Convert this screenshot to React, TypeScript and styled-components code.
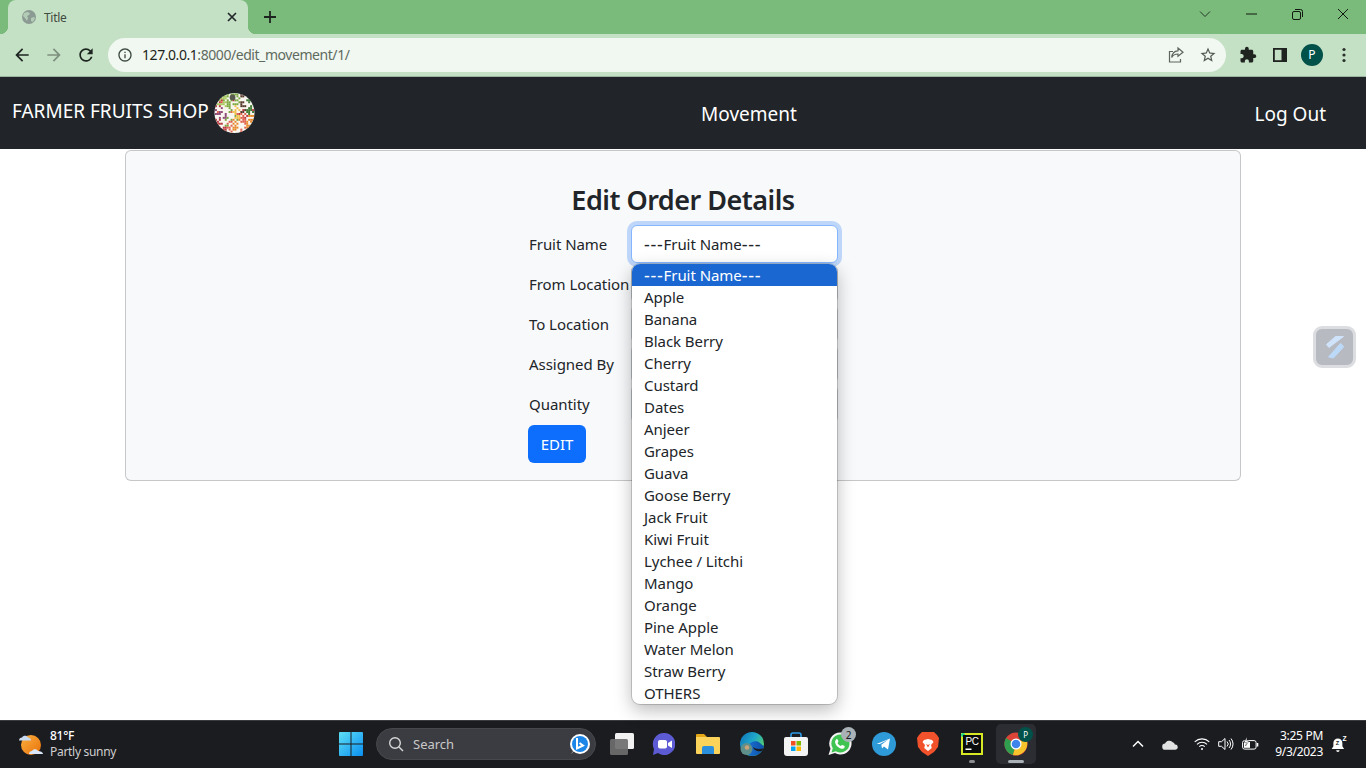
import React from "react";
import styled, { createGlobalStyle } from "styled-components";

const Global = createGlobalStyle`
  html, body { margin: 0; padding: 0; background: #fff; }
  body { font-family: "Noto Sans", "Open Sans", sans-serif; overflow: hidden; }
  * { box-sizing: border-box; }
`;

const Screen = styled.div`
  position: relative;
  width: 1366px;
  height: 768px;
  display: flex;
  flex-direction: column;
  overflow: hidden;
`;

/* ---------- browser chrome ---------- */
const TabStrip = styled.div`
  height: 34px;
  background: #7abb7c;
  display: flex;
  align-items: flex-end;
  padding-left: 8px;
  flex: none;
`;
const Tab = styled.div`
  position: relative;
  width: 240px;
  height: 34px;
  background: #c5e1c5;
  border-radius: 8px 8px 0 0;
  display: flex;
  align-items: center;
  padding: 0 11px 0 13px;
  gap: 7px;
  color: #3f4a40;
  font-size: 12px;
  letter-spacing: -0.3px;
  &::before, &::after {
    content: "";
    position: absolute;
    bottom: 0;
    width: 8px;
    height: 8px;
  }
  &::before { left: -8px; background: radial-gradient(circle at 0 0, transparent 8px, #c5e1c5 8.5px); }
  &::after { right: -8px; background: radial-gradient(circle at 100% 0, transparent 8px, #c5e1c5 8.5px); }
`;
const TabTitle = styled.span`
  flex: 1;
`;
const NewTab = styled.div`
  width: 28px;
  height: 28px;
  margin: 0 0 3px 8px;
  display: flex;
  align-items: center;
  justify-content: center;
`;
const WindowControls = styled.div`
  margin-left: auto;
  align-self: stretch;
  display: flex;
  padding: 0 0 6px 0;
`;
const WinButton = styled.div`
  width: 46px;
  display: flex;
  align-items: center;
  justify-content: center;
`;
const Toolbar = styled.div`
  height: 43px;
  flex: none;
  background: #c5e1c5;
  border-bottom: 1px solid #9db59e;
  display: flex;
  align-items: center;
  padding: 0 0 1px 6px;
`;
const NavIcon = styled.div`
  width: 32px;
  height: 32px;
  display: flex;
  align-items: center;
  justify-content: center;
`;
const Omnibox = styled.div`
  width: 1118px;
  height: 34px;
  margin-left: 6px;
  border-radius: 17px;
  background: #f1f7f1;
  display: flex;
  align-items: center;
  padding: 0 2px 0 9px;
  font-size: 14px;
  letter-spacing: -0.44px;
  color: #5f6b60;
`;
const Url = styled.span`
  flex: 1;
  margin: 0 0 0 9px;
  b { font-weight: 400; color: #1d2420; }
`;
const OmniIcon = styled.div`
  width: 32px;
  height: 26px;
  display: flex;
  align-items: center;
  justify-content: center;
`;
const ToolIcons = styled.div`
  display: flex;
  align-items: center;
  margin-left: 6px;
`;
const ToolIcon = styled.div`
  width: 32px;
  height: 32px;
  display: flex;
  align-items: center;
  justify-content: center;
`;
const Avatar = styled.div`
  width: 22px;
  height: 22px;
  border-radius: 50%;
  background: #00514a;
  color: #fff;
  font-size: 12px;
  display: flex;
  align-items: center;
  justify-content: center;
`;

/* ---------- page ---------- */
const Navbar = styled.nav`
  height: 72px;
  flex: none;
  background: #212529;
  color: #fff;
  display: grid;
  grid-template-columns: 1fr auto 1fr;
  align-items: center;
  padding: 0 40px 0 12px;
  font-size: 19px;
  letter-spacing: 0;
`;
const Brand = styled.div`
  display: flex;
  align-items: center;
  gap: 5px;
  margin-top: -1px;
  span { margin-bottom: 4px; }
`;
const NavLink = styled.div<{ $right?: boolean }>`
  justify-self: ${(p) => (p.$right ? "end" : "center")};
  margin-left: ${(p) => (p.$right ? "0" : "160px")};
  margin-top: 2px;
`;
const Main = styled.main`
  flex: 1;
  padding-top: 1px;
  background: #fff;
`;
const Card = styled.section`
  width: 1116px;
  height: 331px;
  margin: 0 auto;
  background: #f8f9fa;
  border: 1px solid rgba(0, 0, 0, 0.2);
  border-radius: 6px;
  display: flex;
  flex-direction: column;
  align-items: center;
  padding-top: 30px;
`;
const Heading = styled.h2`
  margin: 0 0 6px;
  font-size: 27px;
  line-height: 38px;
  font-weight: 600;
  letter-spacing: -0.5px;
  color: #212529;
`;
const Form = styled.div`
  position: relative;
  width: 310px;
  display: flex;
  flex-direction: column;
  gap: 2px;
`;
const Row = styled.div`
  display: grid;
  grid-template-columns: 103px 207px;
  align-items: center;
  height: 38px;
  font-size: 15px;
  letter-spacing: -0.05px;
  color: #212529;
`;
const Label = styled.span`
  padding-left: 1px;
  white-space: nowrap;
`;
const Dashes = styled.span`
  font-size: 18px;
  letter-spacing: 0.7px;
  line-height: 0;
  vertical-align: -1px;
`;
const Field = styled.div<{ $focus?: boolean }>`
  height: 38px;
  background: #fff;
  border: 1px solid ${(p) => (p.$focus ? "#86b7fe" : "#ced4da")};
  border-radius: 6px;
  box-shadow: ${(p) => (p.$focus ? "0 0 0 4px rgba(13,110,253,.25)" : "none")};
  padding: 0 12px;
  display: flex;
  align-items: center;
  white-space: pre;
`;
const EditButton = styled.div`
  width: 58px;
  height: 38px;
  background: #0d6efd;
  color: #fff;
  border-radius: 6px;
  display: flex;
  align-items: center;
  justify-content: center;
  font-size: 15px;
  letter-spacing: -0.05px;
`;
const Dropdown = styled.div`
  position: absolute;
  left: 104px;
  top: 39px;
  width: 205px;
  height: 440px;
  background: #fff;
  border-radius: 8px;
  overflow: hidden;
  box-shadow: 0 0 0 1px rgba(0,0,0,.16), 0 6px 18px rgba(0,0,0,.28);
  z-index: 5;
`;
const Option = styled.div<{ $selected?: boolean }>`
  height: 22px;
  line-height: 22px;
  padding-left: 12px;
  font-size: 15px;
  letter-spacing: -0.05px;
  white-space: nowrap;
  color: ${(p) => (p.$selected ? "#fff" : "#212529")};
  background: ${(p) => (p.$selected ? "#1a67d2" : "transparent")};
`;
const FloatWidget = styled.div`
  position: absolute;
  left: 1313px;
  top: 326px;
  width: 43px;
  height: 42px;
  border-radius: 9px;
  border: 3px solid #dcdde1;
  background: #b8bac2;
  display: flex;
  align-items: center;
  justify-content: center;
`;

/* ---------- taskbar ---------- */
const Taskbar = styled.footer`
  height: 48px;
  flex: none;
  background: #1b1c20;
  border-top: 1px solid #3a3b3f;
  display: flex;
  align-items: center;
  padding-bottom: 1px;
  color: #fff;
  font-size: 12px;
  letter-spacing: -0.3px;
`;
const Weather = styled.div`
  width: 331px;
  padding-left: 18px;
  display: flex;
  align-items: center;
  gap: 6px;
`;
const WeatherText = styled.div`
  display: flex;
  flex-direction: column;
  line-height: 16px;
  span { color: #cfcfcf; }
  strong { font-weight: 500; }
`;
const Center = styled.div`
  display: flex;
  align-items: center;
`;
const Slot = styled.div<{ $ml?: number; $active?: boolean }>`
  position: relative;
  width: 40px;
  height: 40px;
  margin-left: ${(p) => p.$ml ?? 0}px;
  border-radius: 5px;
  display: flex;
  align-items: center;
  justify-content: center;
  background: ${(p) => (p.$active ? "#2c2d32" : "transparent")};
`;
const RunDot = styled.div<{ $wide?: boolean }>`
  position: absolute;
  bottom: 1px;
  left: 50%;
  transform: translateX(-50%);
  width: ${(p) => (p.$wide ? 16 : 6)}px;
  height: 3px;
  border-radius: 2px;
  background: ${(p) => (p.$wide ? "#a9b0b6" : "#8b8c90")};
`;
const Badge = styled.div`
  position: absolute;
  top: 3px;
  right: 4px;
  width: 15px;
  height: 15px;
  border-radius: 50%;
  background: #a9b2b7;
  color: #1b1c20;
  font-size: 10px;
  display: flex;
  align-items: center;
  justify-content: center;
`;
const ProfileBadge = styled.div`
  position: absolute;
  top: 3px;
  right: 3px;
  width: 15px;
  height: 15px;
  border-radius: 50%;
  background: #00514a;
  color: #fff;
  font-size: 8px;
  display: flex;
  align-items: center;
  justify-content: center;
`;
const SearchPill = styled.div`
  width: 220px;
  height: 32px;
  margin: 0 6px 0 5px;
  border-radius: 16px;
  background: #3b3c41;
  border: 1px solid #47484c;
  display: flex;
  align-items: center;
  padding: 0 4px 0 11px;
  gap: 9px;
  color: #c9c9c9;
  font-size: 13px;
  letter-spacing: 0;
  span { flex: 1; }
`;
const Tray = styled.div`
  margin-left: auto;
  display: flex;
  align-items: center;
  padding-right: 15px;
`;
const TrayIcon = styled.div<{ $w: number }>`
  width: ${(p) => p.$w}px;
  display: flex;
  align-items: center;
  justify-content: center;
`;
const Clock = styled.div`
  width: 61px;
  margin: 0 4px 0 0;
  text-align: right;
  line-height: 16px;
  white-space: nowrap;
`;

/* ---------- icons ---------- */
const M = ({ d, c, s = 24 }: { d: string; c: string; s?: number }) => (
  <svg width={s} height={s} viewBox="0 0 24 24"><path d={d} fill={c} /></svg>
);
const BACK = "M20 11H7.83l5.59-5.59L12 4l-8 8 8 8 1.41-1.41L7.83 13H20v-2z";
const FWD = "M4 11h12.17l-5.59-5.59L12 4l8 8-8 8-1.41-1.41L16.17 13H4v-2z";
const RELOAD = "M17.65 6.35A7.958 7.958 0 0 0 12 4c-4.42 0-7.99 3.58-7.99 8s3.57 8 7.99 8c3.73 0 6.84-2.55 7.73-6h-2.08A5.99 5.99 0 0 1 12 18c-3.31 0-6-2.69-6-6s2.69-6 6-6c1.66 0 3.14.69 4.22 1.78L13 11h7V4l-2.35 2.35z";
const INFO = "M11 7h2v2h-2zm0 4h2v6h-2zm1-9C6.48 2 2 6.48 2 12s4.48 10 10 10 10-4.48 10-10S17.52 2 12 2zm0 18c-4.41 0-8-3.59-8-8s3.59-8 8-8 8 3.59 8 8-3.59 8-8 8z";
const STAR = "M22 9.24l-7.19-.62L12 2 9.19 8.63 2 9.24l5.46 4.73L5.82 21 12 17.27 18.18 21l-1.63-7.03L22 9.24zM12 15.4l-3.76 2.27 1-4.28-3.32-2.88 4.38-.38L12 6.1l1.71 4.04 4.38.38-3.32 2.88 1 4.28L12 15.4z";
const PUZZLE = "M20.5 11H19V7c0-1.1-.9-2-2-2h-4V3.5C13 2.12 11.88 1 10.5 1S8 2.12 8 3.5V5H4c-1.1 0-1.99.9-1.99 2v3.8H3.5c1.49 0 2.7 1.21 2.7 2.7s-1.21 2.7-2.7 2.7H2V20c0 1.1.9 2 2 2h3.8v-1.5c0-1.49 1.21-2.7 2.7-2.7 1.49 0 2.7 1.21 2.7 2.7V22H17c1.1 0 2-.9 2-2v-4h1.5c1.38 0 2.5-1.12 2.5-2.5S21.88 11 20.5 11z";

const Globe = () => (
  <svg width="16" height="16" viewBox="0 0 16 16">
    <circle cx="8" cy="8" r="7" fill="#8b9a93" />
    <path d="M3 4l3-1 3 1-1 2-2 1 1 2-1 3-2-3-2-2zM10 9l3-1 1 1-2 4-2-1z" fill="#c5e1c5" opacity=".7" />
  </svg>
);
const Share = () => (
  <svg width="18" height="18" viewBox="0 0 18 18" fill="none" stroke="#5c665d" strokeWidth="1.2">
    <path d="M6 5.5H2.5v10.5h11v-3" />
    <path d="M11 2l5 4.3-5 4V8c-3 0-5 1-6.3 3.6C5 8 7 5 11 4.8z" />
  </svg>
);
const SidePanel = () => (
  <svg width="14" height="14" viewBox="0 0 14 14">
    <path d="M0 0h14v14H0z" fill="#202421" />
    <path d="M1.8 1.8H8.5v10.4H1.8z" fill="#c5e1c5" />
  </svg>
);
const Dots = () => (
  <svg width="16" height="16" viewBox="0 0 16 16" fill="#2a302b">
    <circle cx="8" cy="2.5" r="1.6" /><circle cx="8" cy="8" r="1.6" /><circle cx="8" cy="13.5" r="1.6" />
  </svg>
);

const MOSAIC = ["#b8393f", "#e8872a", "#f0c04c", "#7aa83f", "#3f7a34", "#8d4a78", "#e2604f", "#a9c95b", "#54382c"];
const mosaicCells = (() => {
  const cells: { x: number; y: number; c: string }[] = [];
  let seed = 17;
  for (let y = 1; y < 41; y += 2) {
    for (let x = 1; x < 41; x += 2) {
      seed = (seed * 73 + 41) % 1009;
      const main = x < 12 ? (y > 26 ? 0 : y < 14 ? 7 : 5) : x < 19 ? (y > 28 ? 6 : 3) : x < 27 ? (y < 12 ? 3 : y < 26 ? 2 : 1) : x < 33 ? (y < 20 ? 8 : 6) : (y < 22 ? 4 : 1);
      if (seed % 100 < 52) continue;
      cells.push({ x, y, c: MOSAIC[seed % 6 === 0 ? seed % MOSAIC.length : main] });
    }
  }
  return cells;
})();
const LogoMark = () => (
  <svg width="41" height="42" viewBox="0 0 42 42">
    <defs>
      <clipPath id="lc"><circle cx="21" cy="21" r="20.5" /></clipPath>
      <filter id="lb"><feGaussianBlur stdDeviation="0.45" /></filter>
    </defs>
    <g clipPath="url(#lc)">
      <rect width="42" height="42" fill="#f8f6ef" />
      <g filter="url(#lb)">
        {mosaicCells.map((m, i) => <rect key={i} x={m.x} y={m.y} width="2" height="2" fill={m.c} />)}
        <circle cx="19" cy="5" r="3" fill="#5a5a50" />
      </g>
    </g>
  </svg>
);
const Slash = () => (
  <svg width="24" height="26" viewBox="0 0 24 26">
    <path d="M12.500 2.500h8L6 13.500l-2.500-3z" fill="#cfe3fb" stroke="#cfe3fb" strokeLinejoin="round" />
    <path d="M17.500 9.300l3.300 3.400L10.500 24l-5-1z" fill="#bcd9f7" stroke="#bcd9f7" strokeLinejoin="round" />
  </svg>
);
const WeatherIcon = () => (
  <svg width="26" height="26" viewBox="0 0 26 26">
    <defs><linearGradient id="sun" x1="0" y1="0" x2="1" y2="1"><stop offset="0" stopColor="#fbb040" /><stop offset="1" stopColor="#e8710a" /></linearGradient></defs>
    <circle cx="13" cy="14" r="10" fill="url(#sun)" />
    <path d="M1 9.500c0-2 1.500-3 3-3 1-2.500 5-2.500 6 0 2 0 3 1.500 3 3z" fill="#c8d9f2" />
    <path d="M11 23c0-2 1.500-3 3-3 1-2.500 5-2.500 6 0 2 0 5 1 5 3z" fill="#dbe7f8" />
  </svg>
);
const WindowsLogo = () => (
  <svg width="24" height="24" viewBox="0 0 24 24">
    <defs><linearGradient id="win" x1="0" y1="0" x2="1" y2="1"><stop offset="0" stopColor="#5ee0f5" /><stop offset="1" stopColor="#0a8ef0" /></linearGradient></defs>
    <path d="M0 1a1 1 0 0 1 1-1h10.500v11.500H0zM12.500 0H23a1 1 0 0 1 1 1v10.500H12.500zM0 12.500h11.500V24H1a1 1 0 0 1-1-1zM12.500 12.500H24V23a1 1 0 0 1-1 1H12.500z" fill="url(#win)" />
  </svg>
);
const SearchGlass = () => (
  <svg width="16" height="16" viewBox="0 0 16 16" fill="none" stroke="#d8d8d8" strokeWidth="1.4">
    <circle cx="7" cy="7" r="5.3" /><path d="M11 11l4 4" />
  </svg>
);
const Bing = () => (
  <svg width="22" height="22" viewBox="0 0 22 22">
    <circle cx="11" cy="11" r="10" fill="#fff" />
    <path d="M2 21l3-3 0-5h3z" fill="#fff" />
    <circle cx="11" cy="11" r="8" fill="#1c86e8" />
    <path d="M8 5v10.500l6-3-3.500-2.500" fill="none" stroke="#fff" strokeWidth="2" />
  </svg>
);
const TaskView = () => (
  <svg width="24" height="24" viewBox="2 0 24 24">
    <rect x="7" y="1" width="19" height="16" rx="1.500" fill="#f1f1f1" />
    <rect x="2" y="7" width="18" height="16" rx="1.500" fill="#6e6e6e" opacity=".92" />
  </svg>
);
const Meet = () => (
  <svg width="24" height="24" viewBox="0 0 24 24">
    <path d="M13 1a11 11 0 1 1-6 20l-5 2 1-6A11 11 0 0 1 13 1z" fill="#5d5bd4" />
    <rect x="7" y="8" width="9" height="8.500" rx="2" fill="#fff" />
    <path d="M17 11l4-2.500v7.500l-4-2.500z" fill="#fff" />
  </svg>
);
const Folder = () => (
  <svg width="24" height="24" viewBox="0 0 24 24">
    <path d="M0 3a1 1 0 0 1 1-1h7l3 3h-11z" fill="#e3a717" />
    <path d="M0 5h23a1 1 0 0 1 1 1v15a1 1 0 0 1-1 1H1a1 1 0 0 1-1-1z" fill="#fbd25a" />
    <path d="M6 16a2 2 0 0 1 2-2h8a2 2 0 0 1 2 2v6H6z" fill="#2a8fdc" />
  </svg>
);
const Edge = () => (
  <svg width="24" height="24" viewBox="0 0 24 24">
    <defs>
      <linearGradient id="edg" x1="0" y1="0" x2="1" y2="0.6"><stop offset="0" stopColor="#0e6fb8" /><stop offset=".55" stopColor="#1fa8c9" /><stop offset="1" stopColor="#58d06a" /></linearGradient>
      <linearGradient id="edb" x1="0" y1="0" x2="1" y2="0"><stop offset="0" stopColor="#1b6fd0" /><stop offset="1" stopColor="#0b4fa8" /></linearGradient>
    </defs>
    <circle cx="12" cy="12" r="12" fill="url(#edg)" />
    <path d="M8 14c2-5 9-6 12-3 2 2 3.500 3 4 3-1 6-6 10-12 10-2 0-3-1-4-2z" fill="url(#edb)" />
    <path d="M13 15c2 2 6 2.500 10.500 1.500-.5 1-1 1.500-1.500 2.500-3 1-8 0-9-4z" fill="#1b1c20" />
    <circle cx="6.500" cy="17" r="6" fill="#5f8f8a" />
    <circle cx="7" cy="15.500" r="2.300" fill="#c9a37a" />
  </svg>
);
const Store = () => (
  <svg width="24" height="24" viewBox="0 0 24 24">
    <path d="M7 6V3a2 2 0 0 1 2-2h6a2 2 0 0 1 2 2v3" fill="none" stroke="#2f9be8" strokeWidth="1.600" />
    <path d="M0 7a2 2 0 0 1 2-2h20a2 2 0 0 1 2 2v14a3 3 0 0 1-3 3H3a3 3 0 0 1-3-3z" fill="#f4f4f4" />
    <rect x="7" y="9" width="4.500" height="4.500" fill="#f25022" /><rect x="12.500" y="9" width="4.500" height="4.500" fill="#7fba00" />
    <rect x="7" y="14.500" width="4.500" height="4.500" fill="#00a4ef" /><rect x="12.500" y="14.500" width="4.500" height="4.500" fill="#ffb900" />
  </svg>
);
const WhatsApp = () => (
  <svg width="24" height="24" viewBox="0 0 24 24">
    <path d="M12.500 0.500a11 11 0 1 1-5.500 20.500L0.500 23l2-6.300A11 11 0 0 1 12.500 0.500z" fill="#f4f4f4" />
    <path d="M12.500 2.500a9 9 0 1 1-4.700 16.700L3.500 20.500l1.300-4.200A9 9 0 0 1 12.500 2.500z" fill="#3fc351" />
    <path d="M9 7c1 0 1.500 2.500 1.300 3l-.8 1c.6 1.300 2 2.500 3.300 3l1-1c.8-.3 2.800.8 3 1.300 0 2-2 2.700-3 2.500-3.300-.6-6-3.300-6.700-6.300C6.900 9 8 7 9 7z" fill="#fff" />
  </svg>
);
const Telegram = () => (
  <svg width="24" height="24" viewBox="0 0 24 24">
    <circle cx="12" cy="12" r="12" fill="#2e9ad8" />
    <path d="M4.500 12L18 6.500l-2 11-4-3-2 2-.7-3.800 6.700-5-8.200 4.300z" fill="#fff" />
  </svg>
);
const Brave = () => (
  <svg width="24" height="24" viewBox="0 0 24 24">
    <path d="M6 0h12l3 3 2 3-1 9-4 5-6 4-6-4-4-5-1-9 2-3z" fill="#f1512b" />
    <path d="M8 8l4-1 4 1 1.500 2-2.500 3 .8 3L12 19l-3.800-3 .8-3-2.500-3z" fill="#fff" />
    <path d="M10 12l2 1 2-1-2 3.500z" fill="#f1512b" />
  </svg>
);
const PyCharm = () => (
  <svg width="22" height="22" viewBox="0 0 22 22">
    <rect width="22" height="22" fill="#d7e825" />
    <circle cx="2" cy="2" r="2" fill="#21d789" />
    <rect x="2" y="2" width="18" height="18" fill="#0b0d0c" />
    <text x="4.500" y="11.500" fontSize="10" fill="#fff" fontFamily="Liberation Sans, sans-serif">PC</text>
    <rect x="4.500" y="15.500" width="6" height="1.500" fill="#fff" />
  </svg>
);
const ChromeLogo = () => (
  <svg width="24" height="24" viewBox="0 0 24 24">
    <circle cx="12" cy="12" r="11.500" fill="#dc4437" />
    <path d="M12 12L2 6A11.500 11.500 0 0 0 9 23z" fill="#2f9e4f" />
    <path d="M12 12l-3 11A11.500 11.500 0 0 0 23 9.500L12 8z" fill="#f7c52b" />
    <circle cx="12" cy="12" r="5.500" fill="#fff" />
    <circle cx="12" cy="12" r="4.300" fill="#3f84ea" />
  </svg>
);
const Caret = () => (
  <svg width="12" height="8" viewBox="0 0 12 8" fill="none" stroke="#fff" strokeWidth="1.500"><path d="M1 6.500l5-5 5 5" /></svg>
);
const Cloud = () => (
  <svg width="16" height="11" viewBox="0 0 18 12">
    <path d="M4 12a3.500 3.500 0 0 1-.5-7A5 5 0 0 1 12 3.500 3.500 3.500 0 0 1 14.500 6a3 3 0 0 1 .5 6z" fill="#e2e2e2" />
  </svg>
);
const Wifi = () => (
  <svg width="16" height="14" viewBox="0 0 16 14" fill="none" stroke="#fff" strokeWidth="1.100">
    <path d="M.7 4.800a10.500 10.500 0 0 1 14.600 0M3 7.300a7.200 7.200 0 0 1 10 0M5.300 9.700a3.800 3.800 0 0 1 5.400 0" />
    <circle cx="8" cy="12" r="1" fill="#fff" stroke="none" />
  </svg>
);
const Volume = () => (
  <svg width="16" height="14" viewBox="0 0 16 14" fill="none" stroke="#fff" strokeWidth="1">
    <path d="M.7 4.700h2.800L7 1.500v11L3.500 9.300H.7zM9 4.500a3.500 3.500 0 0 1 0 5M11 3a6 6 0 0 1 0 8M13 1.500a8.500 8.500 0 0 1 0 11" />
  </svg>
);
const Battery = () => (
  <svg width="17" height="14" viewBox="0 0 17 14">
    <rect x=".6" y="3.600" width="13.500" height="8.500" rx="2" fill="none" stroke="#fff" />
    <rect x="14.800" y="6" width="1.500" height="3.500" fill="#fff" />
    <rect x="2" y="5" width="6" height="5.800" fill="#fff" />
    <path d="M5 0L2 5.500h2.500L3.500 9 7 4H4.800z" fill="#fff" stroke="#1b1c20" strokeWidth=".4" />
  </svg>
);
const Bell = () => (
  <svg width="18" height="18" viewBox="0 0 16 16">
    <path d="M7 3a4 4 0 0 0-4 4v3l-1.500 2.500h11L11 10V7a4 4 0 0 0-4-4z" fill="#fff" />
    <path d="M5.500 13.500h3a1.500 1.500 0 0 1-3 0z" fill="#fff" />
    <text x="5" y="9" fontSize="5" fontWeight="700" fill="#1b1c20" fontFamily="Liberation Sans, sans-serif">Z</text>
    <text x="11" y="5.500" fontSize="6" fontWeight="700" fill="#fff" fontFamily="Liberation Sans, sans-serif">Z</text>
  </svg>
);

const FRUITS = ["Apple", "Banana", "Black Berry", "Cherry", "Custard", "Dates", "Anjeer", "Grapes", "Guava", "Goose Berry", "Jack Fruit", "Kiwi Fruit", "Lychee / Litchi", "Mango", "Orange", "Pine Apple", "Water Melon", "Straw Berry", "OTHERS"];

const Placeholder = () => (
  <span><Dashes>---</Dashes>Fruit Name<Dashes>---</Dashes></span>
);

export default function App() {
  return (
    <Screen>
      <Global />
      <TabStrip>
        <Tab>
          <Globe />
          <TabTitle>Title</TabTitle>
          <svg width="10" height="10" viewBox="0 0 10 10" stroke="#22282a" strokeWidth="1.700"><path d="M1 1l8 8M9 1l-8 8" /></svg>
        </Tab>
        <NewTab>
          <svg width="14" height="14" viewBox="0 0 14 14" stroke="#1d2420" strokeWidth="1.800"><path d="M7 1v12M1 7h12" /></svg>
        </NewTab>
        <WindowControls>
          <WinButton><svg width="12" height="8" viewBox="0 0 12 8" fill="none" stroke="#26352a"><path d="M1 1.500l5 5 5-5" /></svg></WinButton>
          <WinButton><svg width="11" height="2" viewBox="0 0 11 2" stroke="#10180f"><path d="M0 1h11" /></svg></WinButton>
          <WinButton><svg width="11" height="11" viewBox="0 0 11 11" fill="none" stroke="#10180f"><rect x=".5" y="2.500" width="8" height="8" rx="1.500" /><path d="M3 .5h5.500a2 2 0 0 1 2 2V8" /></svg></WinButton>
          <WinButton><svg width="12" height="12" viewBox="0 0 12 12" stroke="#10180f"><path d="M1 1l10 10M11 1L1 11" /></svg></WinButton>
        </WindowControls>
      </TabStrip>
      <Toolbar>
        <NavIcon><M d={BACK} c="#1d2420" s={20} /></NavIcon>
        <NavIcon><M d={FWD} c="#7d8f7e" s={20} /></NavIcon>
        <NavIcon><M d={RELOAD} c="#1d2420" s={20} /></NavIcon>
        <Omnibox>
          <M d={INFO} c="#3d4a40" s={16} />
          <Url><b>127.0.0.1</b>:8000/edit_movement/1/</Url>
          <OmniIcon><Share /></OmniIcon>
          <OmniIcon><M d={STAR} c="#4f5a50" s={18} /></OmniIcon>
        </Omnibox>
        <ToolIcons>
          <ToolIcon><M d={PUZZLE} c="#202421" s={18} /></ToolIcon>
          <ToolIcon><SidePanel /></ToolIcon>
          <ToolIcon><Avatar>P</Avatar></ToolIcon>
          <ToolIcon><Dots /></ToolIcon>
        </ToolIcons>
      </Toolbar>

      <Navbar>
        <Brand><span>FARMER FRUITS SHOP</span> <LogoMark /></Brand>
        <NavLink>Movement</NavLink>
        <NavLink $right>Log Out</NavLink>
      </Navbar>

      <Main>
        <Card>
          <Heading>Edit Order Details</Heading>
          <Form>
            <Row><Label>Fruit Name</Label><Field $focus><Placeholder /></Field></Row>
            <Row><Label>From Location</Label><Field /></Row>
            <Row><Label>To Location</Label><Field /></Row>
            <Row><Label>Assigned By</Label><Field /></Row>
            <Row><Label>Quantity</Label><Field /></Row>
            <EditButton>EDIT</EditButton>
            <Dropdown>
              <Option $selected><Placeholder /></Option>
              {FRUITS.map((f) => <Option key={f}>{f}</Option>)}
            </Dropdown>
          </Form>
        </Card>
      </Main>

      <Taskbar>
        <Weather>
          <WeatherIcon />
          <WeatherText><strong>81°F</strong><span>Partly sunny</span></WeatherText>
        </Weather>
        <Center>
          <Slot><WindowsLogo /></Slot>
          <SearchPill><SearchGlass /><span>Search</span><Bing /></SearchPill>
          <Slot><TaskView /></Slot>
          <Slot $ml={1}><Meet /></Slot>
          <Slot $ml={5}><Folder /></Slot>
          <Slot $ml={4}><Edge /></Slot>
          <Slot $ml={4}><Store /></Slot>
          <Slot $ml={4}><WhatsApp /><Badge>2</Badge></Slot>
          <Slot $ml={4}><Telegram /></Slot>
          <Slot $ml={4}><Brave /></Slot>
          <Slot $ml={4}><PyCharm /><RunDot /></Slot>
          <Slot $ml={4} $active><ChromeLogo /><ProfileBadge>P</ProfileBadge><RunDot $wide /></Slot>
        </Center>
        <Tray>
          <TrayIcon $w={24}><Caret /></TrayIcon>
          <TrayIcon $w={40}><Cloud /></TrayIcon>
          <TrayIcon $w={24}><Wifi /></TrayIcon>
          <TrayIcon $w={24}><Volume /></TrayIcon>
          <TrayIcon $w={24}><Battery /></TrayIcon>
          <Clock>3:25 PM<br />9/3/2023</Clock>
          <TrayIcon $w={24}><Bell /></TrayIcon>
        </Tray>
      </Taskbar>
      <FloatWidget><Slash /></FloatWidget>
    </Screen>
  );
}
